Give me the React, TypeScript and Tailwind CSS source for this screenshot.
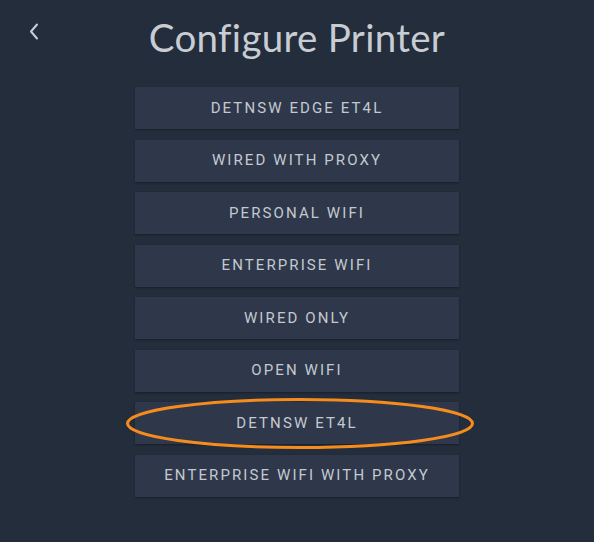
import React from "react";

const items = [
  "DETNSW EDGE ET4L",
  "WIRED WITH PROXY",
  "PERSONAL WIFI",
  "ENTERPRISE WIFI",
  "WIRED ONLY",
  "OPEN WIFI",
  "DETNSW ET4L",
  "ENTERPRISE WIFI WITH PROXY",
];

export default function App() {
  return (
    <div className="w-[594px] h-[542px] bg-[#232d3b] relative overflow-hidden" style={{ fontFamily: "Roboto, sans-serif" }}>
      <div className="relative h-[87px]">
        <button className="absolute left-[27px] top-[22px] text-[#c9ced6]">
          <svg width="14" height="20" viewBox="0 0 14 20" fill="none">
            <path d="M10 2.5 L4 9.5 L10 16.5" stroke="currentColor" strokeWidth="2" strokeLinecap="round" strokeLinejoin="round" />
          </svg>
        </button>
        <h1 className="pt-[13px] text-center text-[38.5px] leading-[48px] text-[#c8ccd3] tracking-[0.3px]" style={{ fontFamily: "Lato, sans-serif", fontWeight: 400 }}>
          Configure Printer
        </h1>
      </div>
      <div className="flex flex-col items-center gap-[10.5px]">
        {items.map((t) => (
          <div key={t} className="relative w-[324px] h-[42px] bg-[#2e384a] shadow-[0_1px_2px_rgba(0,0,0,0.35)] flex items-center justify-center text-[15px] tracking-[2.1px] text-[#c4c9d1]">
            {t}
            {t === "DETNSW ET4L" && (
              <svg className="absolute left-[-12px] top-[-6px]" width="360" height="56" viewBox="0 0 360 56" fill="none">
                <ellipse cx="177" cy="27.5" rx="172.5" ry="24" stroke="#f78c1e" strokeWidth="3" />
              </svg>
            )}
          </div>
        ))}
      </div>
    </div>
  );
}
